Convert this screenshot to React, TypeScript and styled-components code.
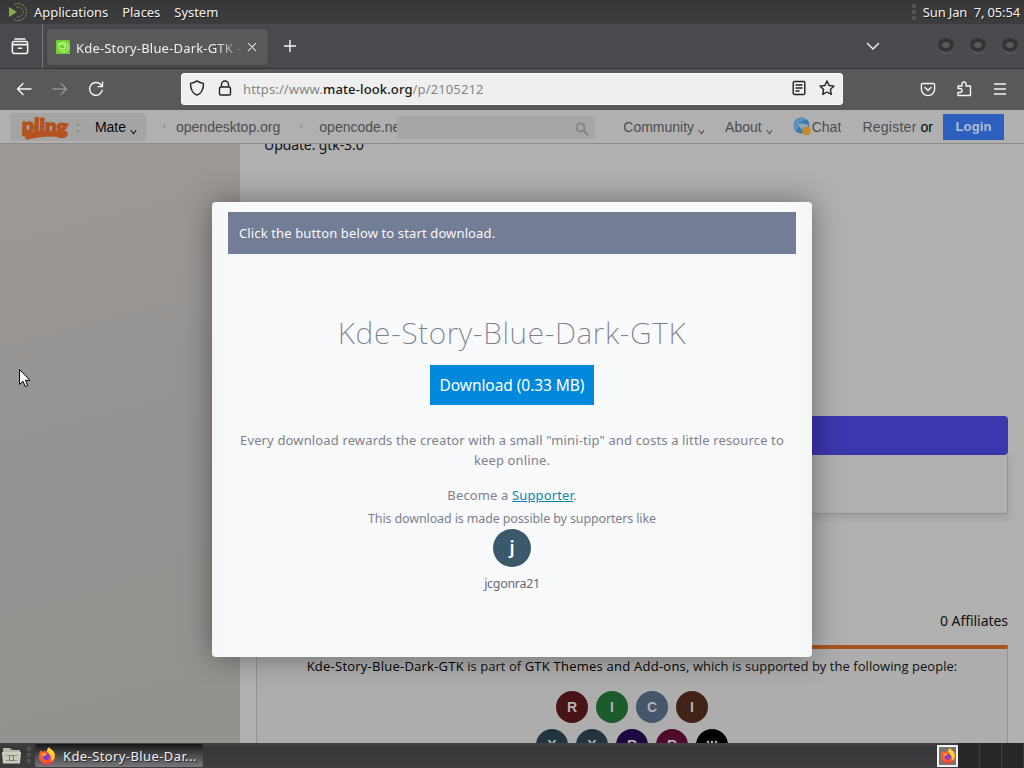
import React from "react";
import styled, { createGlobalStyle } from "styled-components";

const GlobalStyle = createGlobalStyle`
  * { box-sizing: border-box; }
  body { margin: 0; overflow: hidden; }
  svg { display: block; flex: none; }
`;

const Desktop = styled.div`
  position: relative;
  width: 1024px;
  height: 768px;
  display: flex;
  flex-direction: column;
  overflow: hidden;
  background: #3a3a3c;
  font-family: "Noto Sans", sans-serif;
  font-size: 13px;
  color: #f0f0f0;
`;

/* ---- desktop panels ---- */

const TopPanel = styled.div`
  height: 24px;
  flex: none;
  display: flex;
  align-items: center;
  padding: 0 4px 0 7px;
  background: linear-gradient(#373739, #3d3d3f);
  text-shadow: 1px 1px 1px #1b1b1c;
`;

const PanelMenu = styled.span<{ $gap: number }>`
  margin-left: ${(p) => p.$gap}px;
  line-height: 24px;
  letter-spacing: -0.04px;
  white-space: pre;
`;

const Grip = styled.div<{ $left?: number }>`
  width: 4px;
  height: 17px;
  margin-left: ${(p) => p.$left || 0}px;
  background: repeating-linear-gradient(#525255 0 4px, transparent 4px 6px);
`;

const Clock = styled.div`
  margin-left: 7px;
  white-space: pre;
  letter-spacing: -0.15px;
`;

const Spacer = styled.div`
  flex: 1;
`;

const BottomPanel = styled.div`
  height: 25px;
  flex: none;
  display: flex;
  align-items: center;
  padding-left: 2px;
  background: linear-gradient(#414143, #373739 20%, #3d3d3f);
`;

const TaskButton = styled.div`
  width: 168px;
  height: 23px;
  margin-left: 4px;
  padding-left: 3px;
  display: flex;
  align-items: center;
  gap: 7px;
  border-radius: 2px;
  background: linear-gradient(#171718, #3c3c3f 35%, #77777b);
  letter-spacing: 0.4px;
  white-space: nowrap;
  text-shadow: 1px 1px 1px #1b1b1c;
`;

const Workspaces = styled.div`
  display: flex;
  height: 25px;
  width: 87px;
`;

const Workspace = styled.div<{ $active?: boolean }>`
  width: ${(p) => (p.$active ? 21 : 22)}px;
  height: ${(p) => (p.$active ? 22 : 25)}px;
  margin-top: ${(p) => (p.$active ? 2 : 0)}px;
  display: flex;
  align-items: center;
  justify-content: center;
  background: ${(p) => (p.$active ? "#77776f" : "#27272a")};
  border: ${(p) => (p.$active ? "2px solid #f4f4f4" : "0 solid #3d3d40")};
  border-right-width: ${(p) => (p.$active ? 2 : 1)}px;
`;

/* ---- browser window ---- */

const TabBar = styled.div`
  height: 45px;
  flex: none;
  display: flex;
  align-items: center;
  padding: 0 5px 0 11px;
  background: #4a4a4e;
  border-bottom: 1px solid #323235;
`;

const TabDivider = styled.div`
  width: 1px;
  height: 44px;
  margin: 0 4px 0 13px;
  background: #77777a;
`;

const Tab = styled.div`
  width: 221px;
  height: 36px;
  margin-top: 2px;
  margin-right: 15px;
  padding: 0 10px 0 9px;
  display: flex;
  align-items: center;
  background: #59595c;
  border-radius: 3px;
  box-shadow: 0 0 2px #38383b;
`;

const TabTitle = styled.div`
  flex: 1;
  margin: 1px 0 0 6px;
  overflow: hidden;
  white-space: nowrap;
  letter-spacing: 0.18px;
  -webkit-mask-image: linear-gradient(90deg, #000 82%, transparent);
  mask-image: linear-gradient(90deg, #000 82%, transparent);
`;

const WindowDots = styled.div`
  display: flex;
  gap: 16px;
  margin: -2px 1px 0 57px;
`;

const WindowDot = styled.div`
  width: 16px;
  height: 14px;
  border: 4px solid #343437;
  border-radius: 50%;
  background: #59595c;
  box-shadow: 0 2px 2px #59595c;
`;

const NavBar = styled.div`
  height: 41px;
  flex: none;
  display: flex;
  align-items: center;
  padding: 0 16px;
  background: #59595b;
`;

const NavIcons = styled.div<{ $gap: number }>`
  display: flex;
  align-items: center;
  gap: ${(p) => p.$gap}px;
  margin-top: -1px;
`;

const UrlBar = styled.div`
  width: 662px;
  height: 32px;
  margin: -2px 77px 0 77px;
  padding: 0 7px;
  display: flex;
  align-items: center;
  background: #efefef;
  border: 1px solid #fafafa;
  border-radius: 3px;
  color: #858585;
`;

const Url = styled.div`
  flex: 1;
  margin-left: 10px;
  letter-spacing: 0.13px;

  b {
    font-weight: 500;
    color: #161616;
  }
`;

/* ---- web page ---- */

const Page = styled.div`
  position: relative;
  flex: 1;
  min-height: 0;
  display: flex;
  flex-direction: column;
  overflow: hidden;
  background: #b0b0b0;
  color: #111;
`;

const SiteHeader = styled.div`
  height: 34px;
  flex: none;
  display: flex;
  align-items: center;
  padding: 0 20px 0 10px;
  background: #b0b0b0;
  border-bottom: 1px solid #8c8c8c;
  font: 14px "Liberation Sans", sans-serif;
  color: #4c4d50;
`;

const StoreSwitch = styled.div`
  width: 136px;
  height: 28px;
  padding: 0 10px;
  display: flex;
  align-items: center;
  background: #a5a5a5;
  border-radius: 4px;
  color: #050505;
`;

const Colon = styled.span`
  margin: 0 15px 0 6px;
  color: #666;
`;

const Caret = styled.i`
  width: 5px;
  height: 5px;
  margin: 8px 0 0 5px;
  border: solid currentColor;
  border-width: 0 1px 1px 0;
  transform: rotate(45deg) skew(8deg, 8deg);
`;

const Bullet = styled.i`
  width: 3px;
  height: 3px;
  border-radius: 50%;
  background: #989898;
`;

const HeaderLink = styled.span<{ $left?: number; $clip?: number }>`
  display: flex;
  align-items: center;
  margin-left: ${(p) => p.$left || 0}px;
  width: ${(p) => (p.$clip ? p.$clip + "px" : "auto")};
  overflow: hidden;
  white-space: nowrap;
  line-height: 20px;
`;

const RegisterLink = styled.span`
  margin-right: 4px;
  letter-spacing: 0.25px;
`;

const Or = styled.span`
  color: #050505;
`;

const SearchBox = styled.div`
  width: 198px;
  height: 23px;
  margin-top: 1px;
  padding: 3px 6px 0 0;
  display: flex;
  align-items: center;
  justify-content: flex-end;
  background: #a6a6a6;
  border-radius: 3px;
`;

const LoginButton = styled.div`
  width: 61px;
  height: 26px;
  margin-left: 10px;
  background: #2c5fbe;
  color: #b4bfd4;
  font-size: 13px;
  font-weight: bold;
  line-height: 26px;
  letter-spacing: 0.1px;
  text-align: center;
`;

const PageBody = styled.div`
  flex: 1;
  min-height: 0;
  display: flex;
`;

const Sidebar = styled.div`
  width: 240px;
  flex: none;
  background: linear-gradient(165deg, #9e9997, #959492 50%, #92928f);
`;

const Content = styled.div`
  flex: 1;
  min-width: 0;
  padding: 0 16px;
  display: flex;
  flex-direction: column;
  font-family: "Open Sans", sans-serif;
  overflow: hidden;
`;

const UpdateLine = styled.div`
  margin: -9px 0 0 8px;
  height: 20px;
  flex: none;
  font: 14px/20px "Noto Sans", sans-serif;
  letter-spacing: -0.1px;
`;

const PurpleBar = styled.div`
  height: 39px;
  flex: none;
  margin-top: 261px;
  background: #3d37af;
  border-radius: 4px;
`;

const Card = styled.div`
  height: 59px;
  flex: none;
  border: 1px solid #929292;
  border-top: 0;
  box-shadow: 0 3px 8px rgba(0, 0, 0, 0.12);
`;

const Affiliates = styled.div`
  margin-top: 97px;
  height: 20px;
  flex: none;
  font: 14px/20px "Noto Sans", sans-serif;
  letter-spacing: -0.04px;
  text-align: right;
`;

const Supporters = styled.div`
  flex: 1;
  min-height: 0;
  margin-top: 14px;
  padding-top: 7px;
  border: 1px solid #929292;
  border-top: 4px solid #a9541f;
  border-bottom: 0;
  background: #adadad;
  font-size: 13px;
  line-height: 20px;
  letter-spacing: 0.04px;
  text-align: center;

  b {
    font-weight: 500;
    letter-spacing: 0.24px;
    color: #000;
  }
`;

const AvatarRow = styled.div<{ $top: number }>`
  display: flex;
  justify-content: center;
  gap: 8px;
  margin-top: ${(p) => p.$top}px;
`;

const Avatar = styled.div<{ $bg: string; $dots?: boolean }>`
  width: 32px;
  height: 32px;
  border-radius: 50%;
  background: ${(p) => p.$bg};
  color: #b3b3b3;
  font: bold 14px/${(p) => (p.$dots ? 18 : 32)}px "Liberation Sans", sans-serif;
`;

/* ---- download dialog ---- */

const Modal = styled.div`
  position: absolute;
  top: 92px;
  left: 212px;
  width: 600px;
  height: 455px;
  padding: 10px 16px;
  display: flex;
  flex-direction: column;
  align-items: center;
  background: linear-gradient(90deg, #f6f6f6, #f9fafb 3%, #f9fafb 97%, #f5f5f5);
  border-radius: 4px;
  box-shadow: 0 0 30px rgba(0, 0, 0, 0.4);
  color: #7e808c;
  white-space: nowrap;
`;

const Banner = styled.div`
  width: 568px;
  height: 42px;
  flex: none;
  padding-left: 11px;
  background: #737d96;
  color: #f8f8fa;
  line-height: 42px;
  letter-spacing: 0.13px;
`;

const Title = styled.h1`
  margin: 59px 0 0;
  font-size: 30px;
  font-weight: 200;
  line-height: 40px;
  letter-spacing: 0.64px;
`;

const DownloadButton = styled.button`
  width: 164px;
  height: 40px;
  flex: none;
  margin-top: 12px;
  padding: 0;
  border: 0;
  background: #0088dd;
  color: #fff;
  font: 15.5px "Noto Sans", sans-serif;
  letter-spacing: -0.06px;
`;

const Text = styled.p<{ $top: number; $ls?: number; $size?: number; $dark?: boolean }>`
  margin: ${(p) => p.$top}px 0 0;
  font-size: ${(p) => p.$size || 13}px;
  line-height: 20px;
  text-align: center;
  letter-spacing: ${(p) => p.$ls || 0}px;
  color: ${(p) => (p.$dark ? "#686b78" : "#7e808c")};

  a {
    color: #0e86b5;
    text-decoration: underline;
  }
`;

const SupporterAvatar = styled.div`
  width: 38px;
  height: 38px;
  flex: none;
  border-radius: 50%;
  background: #3b596a;
  color: #fff;
  font-size: 18px;
  font-weight: 600;
  line-height: 36px;
  text-align: center;
`;

const Pointer = styled.svg`
  position: absolute;
  left: 18px;
  top: 368px;
`;

type IconProps = { size?: number; color?: string; children: React.ReactNode };

function Icon({ size = 16, color = "#f5f5f5", children }: IconProps) {
  return (
    <svg width={size} height={size} viewBox="0 0 16 16" fill="none" stroke={color} strokeWidth="1.4" strokeLinecap="round" strokeLinejoin="round">
      {children}
    </svg>
  );
}

function MateLogo() {
  return (
    <svg width="20" height="20" viewBox="0 0 20 20" fill="none">
      <path d="M2 5l8 5-8 5z" fill="#86a94f" />
      <path d="M7 2.5a8.5 8.5 0 1 1 0 15" stroke="#718f49" strokeDasharray="3 1" />
      <path d="M9 5.5a5 5 0 1 1 0 9" stroke="#688246" strokeDasharray="3 1" />
    </svg>
  );
}

function Firefox({ size }: { size: number }) {
  return (
    <svg width={size} height={size} viewBox="0 0 18 18">
      <path d="M3 3c.3 1 .9 1.4 1.7 1.7C6 3.8 8 3.7 9 4.5 9 2.5 10 1 11.5.3c.2 2 3.2 2.5 4.5 5 2.8 5.2-.6 12-7 12S-.2 11.2 1.5 6.5C1.7 5 2.3 4 3 3z" fill="#ff5c2e" />
      <path d="M11.5.3c.2 2 3.2 2.5 4.5 5 2 4-.3 8-3 9 1-3 .8-6-4-9.8C9 2.5 10 1 11.5.3z" fill="#ffd23a" />
      <path d="M1.300 10.5c1.5 6 9 8 13.5 3-1.5 5-11.3 6-13.5-3z" fill="#f7255a" />
      <circle cx="8.6" cy="9.8" r="3.3" fill="#7a3fd4" />
      <path d="M3 6.2c3-.8 4.5.5 6.3 1.200-2 .2-2 1.500-4 1.800z" fill="#ffa62b" />
    </svg>
  );
}

function FolderIcon() {
  return (
    <svg width="19" height="19" viewBox="0 0 19 19">
      <path d="M1 2h7l2 2h8v13H1z" fill="#b6b8a6" />
      <path d="M0 6h19l-1 11.5H1z" fill="#cccfbd" />
      <rect x="7.5" y="9.5" width="4" height="5" fill="none" stroke="#77796d" />
      <path d="M3 10l2-1 2 1M3 14l2 1 2-1M16 10l-2-1-2 1M16 14l-2 1-2-1" fill="none" stroke="#94978a" />
    </svg>
  );
}

function PlingLogo() {
  return (
    <svg width="50" height="28" viewBox="0 0 50 28">
      <path d="M4 20q20-4 42-1l-1 6q-18-4-39 2z" fill="#b4531d" />
      <g transform="rotate(2 25 14)">
        <text x="2" y="20" fontFamily="Lato, sans-serif" fontWeight="900" fontSize="20" textLength="46" lengthAdjust="spacingAndGlyphs" fill="#b4531d" stroke="#b4531d" strokeWidth="1.4">
          pling
        </text>
      </g>
    </svg>
  );
}

function ChatLogo() {
  return (
    <svg width="19" height="20" viewBox="0 0 19 20">
      <circle cx="8.5" cy="8.5" r="8" fill="#3d78ad" />
      <path d="M1 8C2 1 10-1 14 3 9 3 6 6 4 14 2 13 1 11 1 8z" fill="#5e92bd" />
      <path d="M5 8c3-2 7-2 11 1l-7 4z" fill="#8fa5b3" />
      <circle cx="13.5" cy="14" r="4.3" fill="#c58b2b" />
    </svg>
  );
}

const firstRow = [
  ["R", "#471316"],
  ["I", "#1d5a2c"],
  ["C", "#46566b"],
  ["I", "#422318"],
];
const secondRow = [
  ["X", "#22343f"],
  ["X", "#22343f"],
  ["R", "#1c0840"],
  ["R", "#500a2c"],
  ["...", "#000"],
];

function BrowserChrome() {
  return (
    <>
      <TabBar>
        <Icon size={18}>
          <path d="M3.500 1.700h9M1.200 6.500V5.500a1.500 1.500 0 0 1 1.500-1.500h10.600a1.500 1.500 0 0 1 1.500 1.500v7.300a1.800 1.800 0 0 1-1.800 1.800H3a1.800 1.800 0 0 1-1.800-1.800zM1.200 6.800h13.600M6.500 10h3" />
        </Icon>
        <TabDivider />
        <Tab>
          <svg width="14" height="14" viewBox="0 0 14 14" fill="none">
            <rect width="14" height="14" rx="1" fill="#72cf2f" />
            <circle cx="7.5" cy="7" r="4.800" stroke="#b9f585" strokeWidth="1.200" />
            <path d="M2 4h5a2.500 2.500 0 1 1-2 4" stroke="#d5ffad" strokeWidth="1.200" />
          </svg>
          <TabTitle>Kde-Story-Blue-Dark-GTK - pling.com</TabTitle>
          <Icon size={12}>
            <path d="M3 3l10 10M13 3L3 13" />
          </Icon>
        </Tab>
        <svg width="14" height="14" viewBox="0 0 14 14" stroke="#f5f5f5" strokeWidth="1.4">
          <path d="M7 1v12M1 7h12" />
        </svg>
        <Spacer />
        <Icon>
          <path d="M2.5 5.5L8 11l5.5-5.5" />
        </Icon>
        <WindowDots>
          <WindowDot />
          <WindowDot />
          <WindowDot />
        </WindowDots>
      </TabBar>
      <NavBar>
        <NavIcons $gap={20}>
          <Icon>
            <path d="M15 8H1.5M7 2.5L1.5 8 7 13.5" />
          </Icon>
          <Icon color="#919193">
            <path d="M1 8h13.5M9 2.5L14.5 8 9 13.5" />
          </Icon>
          <Icon>
            <path d="M14.3 9.2A6.4 6.4 0 1 1 12.7 3.5L14.5 5.5M14.5 1v4.600H10" />
          </Icon>
        </NavIcons>
        <UrlBar>
          <NavIcons $gap={12}>
            <Icon color="#222">
              <path d="M8 .9c2 1.5 4.2 2.3 6.5 2.5 0 5.5-1.5 9.6-6.5 11.7C3 13 1.5 8.9 1.5 3.4 3.8 3.2 6 2.4 8 .9z" />
            </Icon>
            <Icon color="#222">
              <path d="M4.5 7V4.5a3.5 3.5 0 0 1 7 0V7M4 7h8a1.5 1.5 0 0 1 1.5 1.5v5A1.5 1.5 0 0 1 12 15H4a1.5 1.5 0 0 1-1.5-1.5v-5A1.5 1.5 0 0 1 4 7z" />
            </Icon>
          </NavIcons>
          <Url>
            https://www.<b>mate-look.org</b>/p/2105212
          </Url>
          <NavIcons $gap={12}>
            <Icon color="#222">
              <path d="M3.500 1.500h9a1.300 1.300 0 0 1 1.300 1.300v10.400a1.300 1.300 0 0 1-1.300 1.300h-9a1.300 1.300 0 0 1-1.300-1.300V2.800a1.300 1.300 0 0 1 1.300-1.300zM5 5h6M5 8h6M5 11h3" />
            </Icon>
            <Icon color="#222">
              <path d="M8 1l2.100 4.500 4.900.6-3.600 3.400.9 4.900L8 12l-4.300 2.400.9-4.900L1 6.100l4.900-.6z" />
            </Icon>
          </NavIcons>
        </UrlBar>
        <NavIcons $gap={20}>
          <Icon>
            <path d="M2.600 2.500h10.800a1.200 1.200 0 0 1 1.200 1.200V8a6.600 6.600 0 0 1-13.200 0V3.700a1.200 1.200 0 0 1 1.200-1.200zM5 6.500l3 3 3-3" />
          </Icon>
          <Icon>
            <path d="M2 7V5h4V3a2 2 0 0 1 4 0v2h4.500v9.500H2v-3h2a2 2 0 0 0 0-4H2" />
          </Icon>
          <Icon>
            <path d="M2.5 3h11M2.5 8h11M2.5 13h11" />
          </Icon>
        </NavIcons>
      </NavBar>
    </>
  );
}

function PageHeader() {
  return (
    <SiteHeader>
      <StoreSwitch>
        <PlingLogo />
        <Colon>:</Colon>
        Mate
        <Caret />
      </StoreSwitch>
      <HeaderLink $left={17}>
        <Bullet />
      </HeaderLink>
      <HeaderLink $left={10}>opendesktop.org</HeaderLink>
      <HeaderLink $left={20}>
        <Bullet />
      </HeaderLink>
      <HeaderLink $left={16} $clip={78}>
        opencode.net
      </HeaderLink>
      <SearchBox>
        <svg width="14" height="14" viewBox="0 0 14 14" fill="none" stroke="#858585" strokeWidth="2">
          <circle cx="5.5" cy="5.5" r="4" />
          <path d="M8.5 8.5L13 13" strokeWidth="2.5" />
        </svg>
      </SearchBox>
      <HeaderLink $left={28}>
        Community
        <Caret />
      </HeaderLink>
      <HeaderLink $left={21}>
        About
        <Caret />
      </HeaderLink>
      <HeaderLink $left={21}>
        <ChatLogo />
        Chat
      </HeaderLink>
      <Spacer />
      <RegisterLink>Register</RegisterLink>
      <Or>or</Or>
      <LoginButton>Login</LoginButton>
    </SiteHeader>
  );
}

function DownloadDialog() {
  return (
    <Modal>
      <Banner>Click the button below to start download.</Banner>
      <Title>Kde-Story-Blue-Dark-GTK</Title>
      <DownloadButton>Download (0.33 MB)</DownloadButton>
      <Text $top={25} $ls={0.14}>
        Every download rewards the creator with a small "mini-tip" and costs a little resource to
        <br />
        keep online.
      </Text>
      <Text $top={15} $ls={0.14}>
        Become a <a>Supporter</a>.
      </Text>
      <Text $top={4} $size={12.5} $ls={-0.13}>
        This download is made possible by supporters like
      </Text>
      <SupporterAvatar>j</SupporterAvatar>
      <Text $top={7} $size={12.5} $ls={-0.3} $dark>
        jcgonra21
      </Text>
    </Modal>
  );
}

function App() {
  return (
    <>
      <GlobalStyle />
      <Desktop>
        <TopPanel>
          <MateLogo />
          <PanelMenu $gap={7}>Applications</PanelMenu>
          <PanelMenu $gap={14}>Places</PanelMenu>
          <PanelMenu $gap={14}>System</PanelMenu>
          <Spacer />
          <Grip />
          <Clock>Sun Jan  7, 05:54</Clock>
        </TopPanel>

        <BrowserChrome />

        <Page>
          <PageHeader />
          <PageBody>
            <Sidebar />
            <Content>
              <UpdateLine>Update: gtk-3.0</UpdateLine>
              <PurpleBar />
              <Card />
              <Affiliates>0 Affiliates</Affiliates>
              <Supporters>
                <b>Kde-Story-Blue-Dark-GTK</b> is part of <b>GTK Themes and Add-ons</b>, which is supported by the following people:
                <AvatarRow $top={15}>
                  {firstRow.map(([letter, bg], i) => (
                    <Avatar key={i} $bg={bg}>{letter}</Avatar>
                  ))}
                </AvatarRow>
                <AvatarRow $top={6}>
                  {secondRow.map(([letter, bg], i) => (
                    <Avatar key={i} $bg={bg} $dots={letter === "..."}>{letter}</Avatar>
                  ))}
                </AvatarRow>
              </Supporters>
            </Content>
          </PageBody>
          <DownloadDialog />
        </Page>

        <BottomPanel>
          <FolderIcon />
          <Grip $left={6} />
          <TaskButton>
            <Firefox size={18} />
            Kde-Story-Blue-Dar...
          </TaskButton>
          <Spacer />
          <Workspaces>
            <Workspace $active>
              <Firefox size={16} />
            </Workspace>
            <Workspace />
            <Workspace />
            <Workspace />
          </Workspaces>
        </BottomPanel>

        <Pointer width="13" height="20" viewBox="0 0 13 20">
          <path d="M1.5 1.5v15l3.5-3.3 2.3 5.3 2.4-1-2.3-5.2h4.6z" fill="#fff" stroke="#000" />
        </Pointer>
      </Desktop>
    </>
  );
}

export default App;
